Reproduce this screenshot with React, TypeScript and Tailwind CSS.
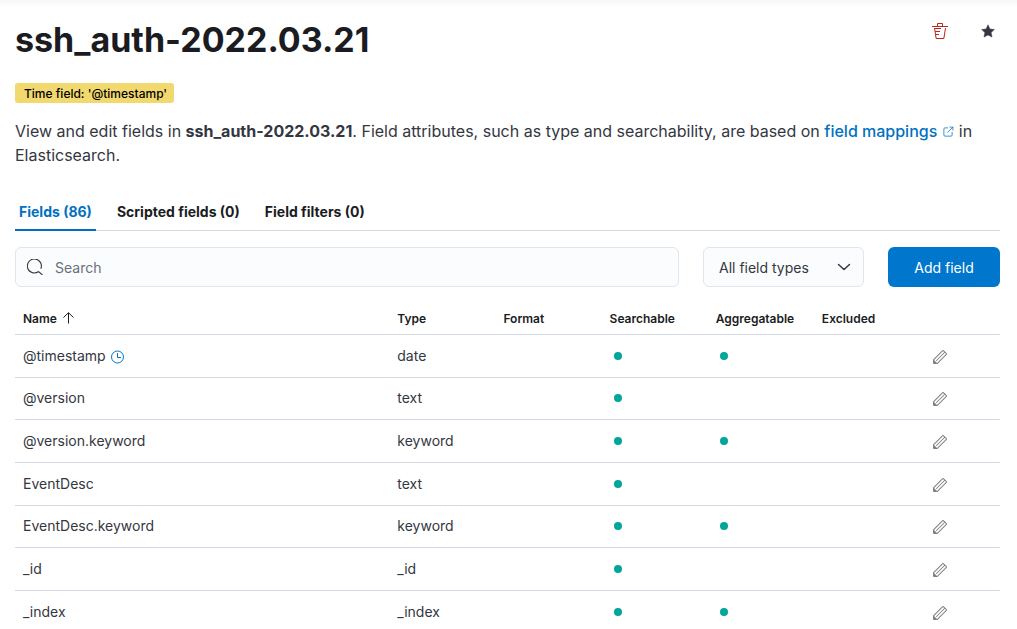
import { ReactNode } from "react";

type Field = {
  name: string;
  type: string;
  aggregatable: boolean;
  time?: boolean;
};

const fields: Field[] = [
  { name: "@timestamp", type: "date", aggregatable: true, time: true },
  { name: "@version", type: "text", aggregatable: false },
  { name: "@version.keyword", type: "keyword", aggregatable: true },
  { name: "EventDesc", type: "text", aggregatable: false },
  { name: "EventDesc.keyword", type: "keyword", aggregatable: true },
  { name: "_id", type: "_id", aggregatable: false },
  { name: "_index", type: "_index", aggregatable: true },
];

function Icon({ className, children }: { className: string; children: ReactNode }) {
  return (
    <svg viewBox="0 0 16 16" fill="currentColor" aria-hidden="true" className={className}>
      {children}
    </svg>
  );
}

function Dot({ label }: { label: string }) {
  return (
    <svg viewBox="0 0 8 8" role="img" aria-label={label} className="ml-1 block size-2 text-[#00a69b]">
      <circle cx="4" cy="4" r="4" fill="currentColor" />
    </svg>
  );
}

function Tab({ children, active }: { children: ReactNode; active?: boolean }) {
  return (
    <button
      type="button"
      role="tab"
      aria-selected={!!active}
      className={
        active
          ? "-mb-px h-10 border-b-2 border-[#0071c2] px-1 pt-1 text-[#0071c2]"
          : "-mb-px h-10 border-b-2 border-transparent px-1 pt-1 text-[#1a1c21]"
      }
    >
      {children}
    </button>
  );
}

function FieldRow({ field }: { field: Field }) {
  return (
    <tr className="h-[43px] border-b border-[#d3dae6] [&:nth-child(3n+2)]:h-[42px]">
      <td className="px-2">
        <span className="flex items-center gap-1">
          {field.name}
          {field.time && (
            <Icon className="mt-0.5 size-4 text-[#0077cc]">
              <circle cx="7.500" cy="8" r="6" fill="none" stroke="currentColor" />
              <path d="M7.500 4v4.500H11" fill="none" stroke="currentColor" />
            </Icon>
          )}
        </span>
      </td>
      <td className="px-2">{field.type}</td>
      <td />
      <td className="px-2">
        <Dot label="Is searchable" />
      </td>
      <td className="px-2">{field.aggregatable && <Dot label="Is aggregatable" />}</td>
      <td />
      <td className="px-2">
        <button type="button" aria-label={`Edit ${field.name}`} className="flex size-6 items-center justify-center pt-0.5 text-[#808080]">
          <Icon className="size-4">
            <path d="M12.148 3.148 11 2l-9 9v3h3l9-9-1.144-1.144-8.002 7.998a.502.502 0 0 1-.708 0 .502.502 0 0 1 0-.708l8.002-7.998ZM11 1c.256 0 .512.098.707.293l3 3a.999.999 0 0 1 0 1.414l-9 9A.997.997 0 0 1 5 15H2a1 1 0 0 1-1-1v-3c0-.265.105-.52.293-.707l9-9A.997.997 0 0 1 11 1ZM5 14H2v-3l3 3Z" />
          </Icon>
        </button>
      </td>
    </tr>
  );
}

export default function App() {
  return (
    <div className="h-screen overflow-hidden bg-white bg-linear-to-b from-[#f7f7f7] to-white to-[8px] pr-[17px] pl-[15px] font-['Inter',sans-serif] text-sm text-[#343741]">
      <header className="flex items-start justify-between pt-[19px]">
        <h1 className="pt-px text-[34px] leading-10 font-bold text-[#1a1c21]">ssh_auth-2022.03.21</h1>
        <div className="flex gap-6">
          <button type="button" aria-label="Delete index pattern" className="flex size-6 items-center justify-center text-[#bd271e]">
            <Icon className="size-4">
              <path d="M11 3h5v1H0V3h5V1a1 1 0 0 1 1-1h4a1 1 0 0 1 1 1v2Zm-7.056 8H7v1H4.1l.392 2.519c.042.269.254.458.493.458h6.03c.239 0 .451-.189.493-.458l1.498-9.576H14l-1.504 9.73c-.116.747-.74 1.304-1.481 1.304h-6.03c-.741 0-1.365-.557-1.481-1.304l-1.511-9.73H9V5.95H3.157L3.476 8H8v1H3.632l.312 2ZM6 3h4V1H6v2Z" />
            </Icon>
          </button>
          <button type="button" aria-label="Default index" className="flex size-6 items-center justify-center">
            <Icon className="size-4">
              <path d="m8 1.800 1.900 4.200 4.500.500-3.300 3.100.9 4.500L8 11.900l-4 2.200.9-4.500-3.300-3.100L6.100 6 8 1.800Z" stroke="currentColor" strokeWidth="0.500" />
            </Icon>
          </button>
        </div>
      </header>

      <div className="mt-[23px] flex">
        <span className="rounded-[3px] bg-[#f1d86f] pr-[7px] pl-[9px] text-xs leading-[21px] h-5 font-medium text-black">
          Time field: '@timestamp'
        </span>
      </div>

      <p className="mt-4 text-base leading-6">
        View and edit fields in <strong className="font-bold">ssh_auth-2022.03.21</strong>. Field attributes, such as type and
        searchability, are based on{" "}
        <a href="#mappings" className="font-medium text-[#0071c2]">
          field mappings
          <Icon className="ml-[5px] inline size-3 align-[-1px]">
            <path
              d="M7.500 2.500H4A1.500 1.500 0 0 0 2.500 4v8A1.500 1.500 0 0 0 4 13.500h8a1.500 1.500 0 0 0 1.500-1.500V8.500M7.500 8.500l7-7M10.500 1.500h4v4"
              fill="none"
              stroke="currentColor"
              strokeLinecap="round"
            />
          </Icon>
        </a>{" "}
        in Elasticsearch.
      </p>

      <div role="tablist" className="mt-6 flex gap-[17px] border-b border-[#d3dae6] font-bold">
        <Tab active>Fields (86)</Tab>
        <Tab>Scripted fields (0)</Tab>
        <Tab>Field filters (0)</Tab>
      </div>

      <div className="mt-4 flex gap-6">
        <label className="flex h-10 flex-1 items-center gap-3 rounded-md border border-[#e0e5ee] bg-[#fbfcfd] px-[11px]">
          <Icon className="size-4 shrink-0">
            <path d="M11.300 12.800A7 7 0 1 1 13.800 9.800M11.300 12.300l4.200 3.700" fill="none" stroke="currentColor" strokeWidth="1.100" />
          </Icon>
          <input
            type="search"
            aria-label="Search"
            placeholder="Search"
            className="min-w-0 flex-1 bg-transparent pt-0.5 outline-none placeholder:text-[#69707d]"
          />
        </label>
        <div className="grid w-[161px] items-center">
          <select
            aria-label="Field type"
            className="col-start-1 row-start-1 h-10 appearance-none rounded-md border border-[#e0e5ee] bg-[#fbfcfd] px-[15px] pt-0.5"
          >
            <option>All field types</option>
          </select>
          <Icon className="pointer-events-none col-start-1 row-start-1 mr-3 size-4 justify-self-end">
            <path d="m2.500 5.500 5.500 5 5.500-5" fill="none" stroke="currentColor" strokeWidth="1.500" strokeLinecap="round" strokeLinejoin="round" />
          </Icon>
        </div>
        <button type="button" className="h-10 w-28 rounded-md bg-[#0077cc] pt-0.5 text-white">
          Add field
        </button>
      </div>

      <table className="mt-4 w-full table-fixed border-collapse text-left">
        <thead>
          <tr className="h-[31px] border-b border-[#d3dae6] text-xs text-[#1a1c21] *:px-2 *:pt-0.5 *:font-semibold">
            <th className="w-[38%]" aria-sort="ascending">
              <button type="button" className="flex items-center gap-1">
                Name
                <Icon className="mb-0.5 size-4">
                  <path d="M7.500 13.500V3M2.500 7.500l5-4.800 5 4.800" fill="none" stroke="currentColor" />
                </Icon>
              </button>
            </th>
            <th>Type</th>
            <th>Format</th>
            <th>Searchable</th>
            <th>Aggregatable</th>
            <th>Excluded</th>
            <th className="w-20" aria-label="Actions" />
          </tr>
        </thead>
        <tbody>
          {fields.map((field) => (
            <FieldRow key={field.name} field={field} />
          ))}
        </tbody>
      </table>
    </div>
  );
}
